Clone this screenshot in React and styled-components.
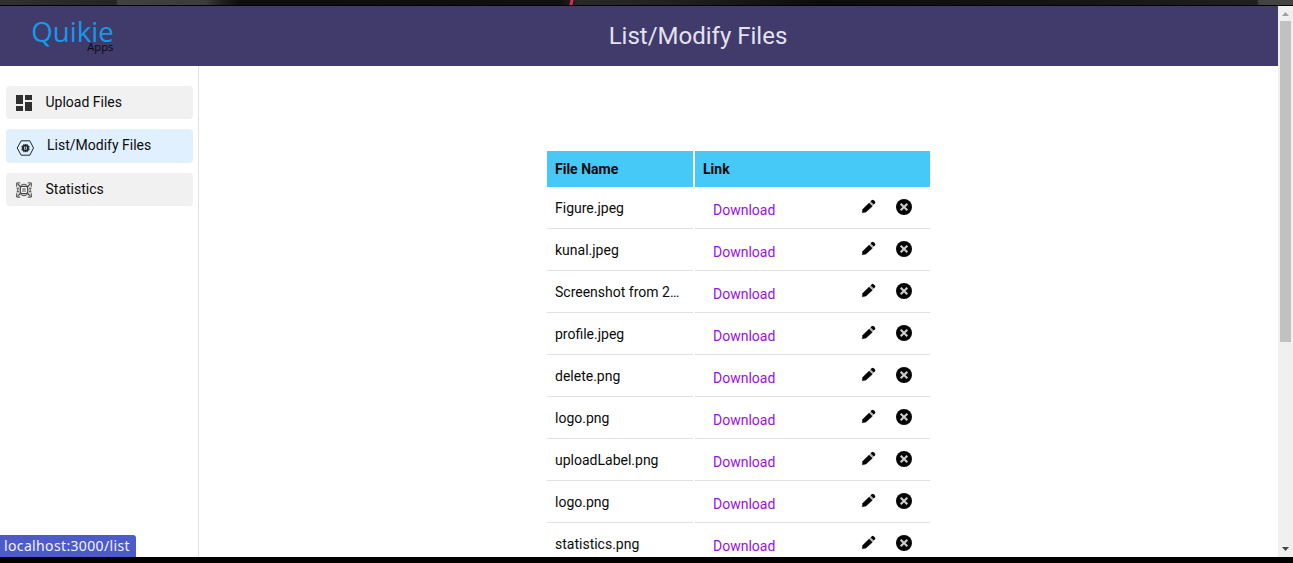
import React from 'react';
import styled, { createGlobalStyle } from 'styled-components';

const GlobalStyle = createGlobalStyle`
  * { box-sizing: border-box; }
  html, body { margin: 0; padding: 0; overflow: hidden; background: #000; }
  body { font-family: Roboto, "Liberation Sans", sans-serif; font-size: 14px; color: #0c0c0c; }
`;

const Screen = styled.div`
  position: relative;
  display: flex;
  flex-direction: column;
  width: 1293px;
  height: 563px;
  padding-bottom: 6px;
  background: #000;
  overflow: hidden;
`;

const DesktopStrip = styled.div`
  flex: none;
  height: 6px;
  border-bottom: 1px solid #000;
  background: linear-gradient(90deg, #303030 0, #252525 116px, #414141 118px, #3c3c3c 205px, #202020 222px, #0d0d0d 240px, #101010 560px, #292929 580px, #222 660px, #0c0c0c 820px, #151515 1080px, #202020 1257px, #434343 1259px, #444 100%);
`;

const Streak = styled.svg`
  display: block;
  margin-left: 566px;
`;

const Browser = styled.div`
  flex: 1;
  min-height: 0;
  display: flex;
  background: #fff;
`;

const Page = styled.div`
  flex: 1;
  min-width: 0;
  display: flex;
  flex-direction: column;
`;

const Header = styled.header`
  flex: none;
  display: flex;
  height: 60px;
  background: #413b6b;
`;

const Logo = styled.div`
  flex: none;
  width: 118px;
  height: 60px;
`;

const Title = styled.h1`
  flex: 1;
  margin: 0;
  text-align: center;
  font-size: 24px;
  font-weight: 400;
  line-height: 60px;
  color: #e4e1f0;
`;

const Body = styled.div`
  flex: 1;
  min-height: 0;
  display: flex;
`;

const Sidebar = styled.nav`
  flex: none;
  display: flex;
  flex-direction: column;
  gap: 10px;
  width: 199px;
  padding: 20px 5px 0 6px;
  border-right: 1px solid #e3e3e3;
`;

const NavItem = styled.a`
  display: flex;
  align-items: center;
  gap: ${(p) => (p.$active ? 12 : 13)}px;
  height: ${(p) => (p.$active ? 34 : 33)}px;
  padding-left: ${(p) => (p.$active ? 10 : 9.5)}px;
  border-radius: 4px;
  background: ${(p) => (p.$active ? '#e0f0fe' : '#f1f1f1')};
  line-height: 32px;

  svg { flex: none; margin-top: ${(p) => (p.$active ? 3 : 1)}px; }
`;

const NavLabel = styled.span`
  height: ${(p) => (p.$active ? 34 : 33)}px;
`;

const Content = styled.main`
  flex: 1;
  min-width: 0;
  display: flex;
  justify-content: center;
  align-items: flex-start;
  padding: 85px 0 0 0;
  overflow: hidden;
`;

const FileTable = styled.div`
  display: grid;
  grid-template-columns: 146px 235px;
  column-gap: 2px;
`;

const HeadCell = styled.div`
  height: 36px;
  padding: 0 8px;
  line-height: 36px;
  font-weight: 700;
  background: #46c9f6;
  color: #040a0c;
`;

const NameCell = styled.div`
  height: 42px;
  padding: 0 8px;
  line-height: 42px;
  border-bottom: 1px solid #e1e1e1;
  white-space: nowrap;
  overflow: hidden;
  text-overflow: ellipsis;
`;

const LinkCell = styled.div`
  display: flex;
  align-items: flex-start;
  height: 42px;
  padding: 0 18px;
  border-bottom: 1px solid #e1e1e1;
`;

const Download = styled.a`
  flex: 1;
  line-height: 46px;
  color: #9a10e6;
`;

const IconButton = styled.button`
  display: block;
  height: 18px;
  margin: 11px 0 0 ${(p) => p.$gap || 0}px;
  padding: 0;
  border: 0;
  background: none;

  svg { display: block; }
`;

const Scrollbar = styled.div`
  flex: none;
  display: flex;
  flex-direction: column;
  align-items: center;
  width: 15px;
  background: #f0f0f0;
`;

const ScrollArrow = styled.svg`
  flex: none;
  display: block;
`;

const Thumb = styled.div`
  width: 11px;
  height: 321px;
  margin-bottom: auto;
  background: #c1c1c1;
`;

const StatusBubble = styled.div`
  position: absolute;
  left: 0;
  bottom: 6px;
  width: 136px;
  height: 22px;
  padding-left: 4px;
  border-top-right-radius: 3px;
  background: #4c5bc9;
  color: #f2f3fc;
  font: 14px/21px "Noto Sans", "Open Sans", sans-serif;
  letter-spacing: 0.36px;
  white-space: nowrap;
`;

const DashboardIcon = () => (
  <svg width="17" height="16" viewBox="0 0 17 16" fill="#303030">
    <path d="M0 0h7v9H0zM9 0h7v5H9zM0 11h7v5H0zM9 7h7v9H9z" />
  </svg>
);

const ChipIcon = () => (
  <svg width="19" height="16" viewBox="0 0 19 16" fill="none" stroke="#20262c">
    <path d="M5.2.8h8.6l3.7 7.2-3.7 7.2H5.2L1.2 8z" strokeWidth="1" />
    <rect x="7.1" y="5.7" width="4.8" height="4.8" rx="1" strokeWidth="1.9" />
    <path d="M7.9 4v1.5M9.5 4v1.5M11.1 4v1.5M7.9 10.5v1.7M9.5 10.5v1.7M11.1 10.5v1.7M5.4 6.5h1.4M5.4 8.1h1.4M5.4 9.7h1.4M12.2 6.5h1.4M12.2 8.1h1.4M12.2 9.7h1.4" strokeWidth=".9" />
    <circle cx="9.5" cy="8.1" r=".9" fill="#20262c" stroke="none" />
  </svg>
);

const StatsIcon = () => (
  <svg width="17" height="16" viewBox="0 0 17 16" fill="none" stroke="#484848" strokeWidth="1">
    <g transform="translate(-.5 0)">
      <rect x="4.8" y="4.4" width="7.4" height="7.2" rx="1.6" strokeWidth="1.3" />
      <path d="M6.8 7h3.4M6.8 9h3.4" />
      <path d="M3.2 5.6Q1 8 3.2 10.4M13.8 5.6Q16 8 13.8 10.4M5.4 3.4Q8.5.8 11.6 3.4M5.4 12.6Q8.5 15.2 11.6 12.6" />
      <path d="M5.2 4.8 2 1.6M11.8 4.8 15 1.6M5.2 11.2 2 14.4M11.8 11.2l3.2 3.2" strokeWidth="1.2" />
      <path d="M1.2 4.8V.9h3.6M12.2.9h3.6v3.9M1.2 11.2v3.9h3.6M12.2 15.1h3.6v-3.9" />
      <path d="M3.2 3.8h1.6M12.2 3.8h1.6M3.2 12.2h1.6M12.2 12.2h1.6M1 6.2h1.5M14.5 6.2H16M1 9.8h1.5M14.5 9.8H16" />
    </g>
  </svg>
);

const PencilIcon = () => (
  <svg width="16" height="16" viewBox="0 0 16 16">
    <g transform="translate(.9 -.5)">
      <path d="M1.3 14.1 1.8 10.7 8.2 4.4l3.3 3.3-6.4 5.9-3.4.7z" fill="#050505" stroke="#050505" strokeWidth=".4" strokeLinejoin="round" />
      <path d="m8.5 4 1.2-1.1 3.3 3.3-1.2 1.1z" fill="#aaa" />
      <path d="m9.7 2.9 1.2-1.2q.9-.8 1.8 0l1.4 1.4q.8.9 0 1.7L12.9 6z" fill="#050505" />
    </g>
  </svg>
);

const DeleteIcon = () => (
  <svg width="16" height="16" viewBox="0 0 16 16">
    <circle cx="8" cy="8" r="8" fill="#050505" />
    <path d="m4.7 4.7 6.6 6.6M11.3 4.7l-6.6 6.6" stroke="#cfcfcf" strokeWidth="2.1" />
  </svg>
);

const LogoMark = () => (
  <svg width="118" height="60" viewBox="0 0 118 60">
    <text x="31.2" y="36" fontFamily="Open Sans, Noto Sans, sans-serif" fontSize="28" fontWeight="400" fill="#1499ea" textLength="82.5" lengthAdjust="spacingAndGlyphs">Quikie</text>
    <text x="87.3" y="45" fontFamily="Open Sans, Noto Sans, sans-serif" fontSize="11" fill="#080711" textLength="26" lengthAdjust="spacingAndGlyphs">Apps</text>
  </svg>
);

const navItems = [
  { label: 'Upload Files', Icon: DashboardIcon },
  { label: 'List/Modify Files', Icon: ChipIcon, active: true },
  { label: 'Statistics', Icon: StatsIcon },
];

const files = [
  'Figure.jpeg',
  'kunal.jpeg',
  'Screenshot from 2020-05-14.png',
  'profile.jpeg',
  'delete.png',
  'logo.png',
  'uploadLabel.png',
  'logo.png',
  'statistics.png',
];

export default function App() {
  return (
    <Screen>
      <GlobalStyle />
      <DesktopStrip>
        <Streak width="12" height="5" viewBox="0 0 12 5">
          <path d="M3.5 5 4.5 0h3L6.5 5z" fill="#d42a55" />
        </Streak>
      </DesktopStrip>
      <Browser>
        <Page>
          <Header>
            <Logo><LogoMark /></Logo>
            <Title>List/Modify Files</Title>
          </Header>
          <Body>
            <Sidebar>
              {navItems.map(({ label, Icon, active }) => (
                <NavItem key={label} $active={active}>
                  <Icon />
                  <NavLabel $active={active}>{label}</NavLabel>
                </NavItem>
              ))}
            </Sidebar>
            <Content>
              <FileTable>
                <HeadCell>File Name</HeadCell>
                <HeadCell>Link</HeadCell>
                {files.map((name, i) => (
                  <React.Fragment key={i}>
                    <NameCell>{name}</NameCell>
                    <LinkCell>
                      <Download>Download</Download>
                      <IconButton aria-label="Edit"><PencilIcon /></IconButton>
                      <IconButton aria-label="Delete" $gap={20}><DeleteIcon /></IconButton>
                    </LinkCell>
                  </React.Fragment>
                ))}
              </FileTable>
            </Content>
          </Body>
        </Page>
        <Scrollbar>
          <ScrollArrow width="15" height="15" viewBox="0 0 15 15"><path d="M4 10h7L7.5 6z" fill="#a0a0a0" /></ScrollArrow>
          <Thumb />
          <ScrollArrow width="15" height="15" viewBox="0 0 15 15"><path d="M4 5h7L7.5 9z" fill="#484848" /></ScrollArrow>
        </Scrollbar>
      </Browser>
      <StatusBubble>localhost:3000/list</StatusBubble>
    </Screen>
  );
}
